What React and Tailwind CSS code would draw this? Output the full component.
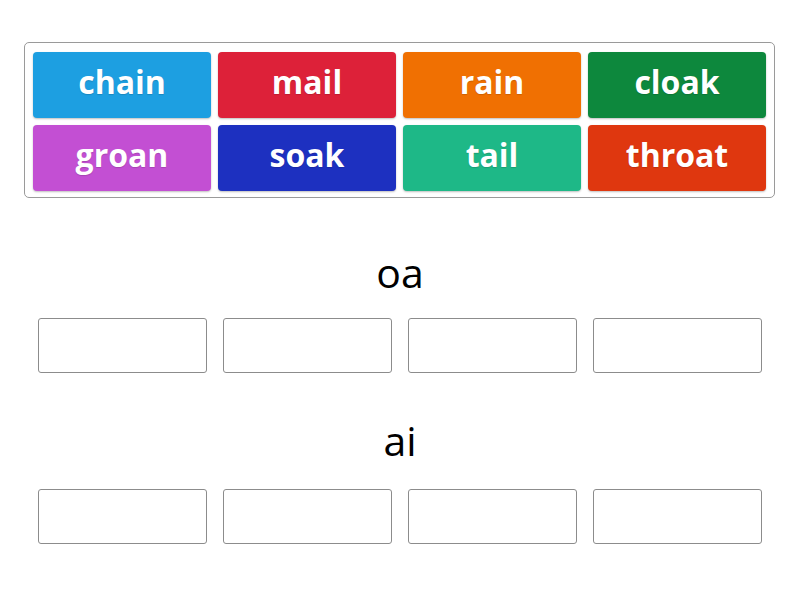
const tiles = [
  { word: 'chain', bg: 'bg-[#1d9fe1]' },
  { word: 'mail', bg: 'bg-[#dd2139]' },
  { word: 'rain', bg: 'bg-[#f07002]' },
  { word: 'cloak', bg: 'bg-[#0d883d]' },
  { word: 'groan', bg: 'bg-[#c34fd3]' },
  { word: 'soak', bg: 'bg-[#1d30c0]' },
  { word: 'tail', bg: 'bg-[#1eb887]' },
  { word: 'throat', bg: 'bg-[#df370f]' },
];

const groups = ['oa', 'ai'];

const DropRow = () => (
  <div className="mx-auto grid w-[724px] grid-cols-4 gap-x-[16px]">
    {[0, 1, 2, 3].map((i) => (
      <div key={i} className="h-[55px] rounded-[3px] border border-[#8c8c8c] bg-white" />
    ))}
  </div>
);

export default function App() {
  return (
    <div className="h-[600px] w-[800px] bg-white font-['Open_Sans',sans-serif]">
      {/* Word bank */}
      <div className="pt-[42px]">
        <div className="mx-[24px] w-[751px] rounded-[5px] border border-[#9a9a9a] px-[8px] pt-[9px] pb-[6px]">
          <div className="grid grid-cols-4 gap-x-[7px] gap-y-[7px]">
            {tiles.map((t) => (
              <div
                key={t.word}
                className={`flex h-[66px] items-center justify-center rounded-[4px] pb-[7px] ${t.bg} shadow-[0_1px_2px_rgba(0,0,0,0.25)]`}
              >
                <span className="text-[32px] leading-none font-bold text-white [text-shadow:0_1px_1px_rgba(0,0,0,0.15)]">
                  {t.word}
                </span>
              </div>
            ))}
          </div>
        </div>
      </div>

      {/* Groups */}
      <div className="mt-[54px] text-center text-[41px] leading-[40px] text-black">{groups[0]}</div>
      <div className="mt-[26px]">
        <DropRow />
      </div>
      <div className="mt-[47px] text-center text-[41px] leading-[40px] text-black">{groups[1]}</div>
      <div className="mt-[29px]">
        <DropRow />
      </div>
    </div>
  );
}
